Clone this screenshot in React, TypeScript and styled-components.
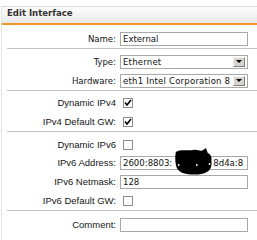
import { createGlobalStyle, styled } from 'styled-components';

const GlobalStyle = createGlobalStyle`
	html, body {
		margin: 0;
		padding: 0;
		background: #fff;
	}
	body {
		width: 257px;
		height: 240px;
		overflow: hidden;
	}
`;

const Panel = styled.div`
	margin: 6px 0 0 1px;
	border-left: 1px solid #e3e3e3;
	height: 234px;
`;

const Header = styled.div`
	height: 16px;
	line-height: 16px;
	padding-left: 5px;
	border-top: 1px solid #d8d8d8;
	border-bottom: 2px solid #f0962a;
	background: linear-gradient(#fdfdfd, #e8e8e8);
	font: bold 9.5px 'DejaVu Sans Condensed', 'DejaVu Sans', sans-serif;
	color: #333;
`;

const Section = styled.div<{ $pt: number; $line?: boolean }>`
	margin-left: 5px;
	padding-top: ${(p) => p.$pt}px;
	border-top: ${(p) => (p.$line ? '1px solid #c3c3c3' : 'none')};
`;

const Row = styled.div<{ $h?: number }>`
	display: grid;
	grid-template-columns: 109px 128px;
	column-gap: 4px;
	align-items: center;
	height: ${(p) => p.$h ?? 19}px;
`;

const Label = styled.span<{ $classic?: boolean }>`
	text-align: right;
	white-space: nowrap;
	font-family: ${(p) => (p.$classic ? "'DejaVu Sans Condensed', 'DejaVu Sans'" : "'Liberation Sans', Arial")}, sans-serif;
	font-size: 9.5px;
	color: #151515;
`;

const FieldWrap = styled.div`
	position: relative;
`;

const Field = styled.div`
	box-sizing: border-box;
	display: flex;
	align-items: center;
	height: 14px;
	padding: 0 1px 0 2px;
	border: 1px solid #a8a8a8;
	background: #fff;
	overflow: hidden;
	white-space: nowrap;
	font: 9.5px 'DejaVu Sans Condensed', 'DejaVu Sans', sans-serif;
	color: #111;
`;

const FieldText = styled.span`
	flex: 1;
	overflow: hidden;
	letter-spacing: 0.2px;
`;

const Gap = styled.span<{ $w: number }>`
	display: inline-block;
	width: ${(p) => p.$w}px;
`;

const DropButton = styled.span`
	flex: none;
	display: flex;
	align-items: center;
	justify-content: center;
	box-sizing: border-box;
	width: 12px;
	height: 10px;
	margin-right: 1px;
	background: #d6d3ce;
	border: 1px solid;
	border-color: #f4f4f4 #7f7f7f #7f7f7f #f4f4f4;

	&::after {
		content: '';
		border-left: 3px solid transparent;
		border-right: 3px solid transparent;
		border-top: 3px solid #000;
	}
`;

const Check = styled.span`
	box-sizing: border-box;
	display: flex;
	align-items: center;
	justify-content: center;
	width: 10px;
	height: 10px;
	margin-left: 3px;
	border: 1px solid #8d8d8d;
	background: #fff;
`;

const Mask = styled.svg`
	position: absolute;
	left: 55px;
	top: -8px;
`;

const Checkbox = ({ checked }: { checked?: boolean }) => (
	<Check>
		{checked && (
			<svg width="8" height="8" viewBox="0 0 8 8">
				<polyline points="1,3.5 3,6 7,1" fill="none" stroke="#000" strokeWidth="1.6" />
			</svg>
		)}
	</Check>
);

const Select = ({ value }: { value: string }) => (
	<Field>
		<FieldText>{value}</FieldText>
		<DropButton />
	</Field>
);

export default function App() {
	return (
		<>
			<GlobalStyle />
			<Panel>
				<Header>Edit Interface</Header>

				<Section $pt={4}>
					<Row>
						<Label $classic>Name:</Label>
						<Field>External</Field>
					</Row>
				</Section>

				<Section $pt={3} $line>
					<Row>
						<Label $classic>Type:</Label>
						<Select value="Ethernet" />
					</Row>
					<Row>
						<Label $classic>Hardware:</Label>
						<Select value="eth1 Intel Corporation 8" />
					</Row>
				</Section>

				<Section $pt={2} $line>
					<Row>
						<Label>Dynamic IPv4</Label>
						<Checkbox checked />
					</Row>
					<Row>
						<Label>IPv4 Default GW:</Label>
						<Checkbox checked />
					</Row>
				</Section>

				<Section $pt={4} $line>
					<Row $h={17}>
						<Label>Dynamic IPv6</Label>
						<Checkbox />
					</Row>
					<Row>
						<Label>IPv6 Address:</Label>
						<FieldWrap>
							<Field>
								2600:8803:
								<Gap $w={41} />
								8d4a:8
							</Field>
							<Mask width="40" height="28" viewBox="0 0 44 28" preserveAspectRatio="none">
								<path
									d="M1 4 C6 1 14 3 20 2 C25 1 28 4 31 2 L34 0 L36 5 C39 6 41 9 40 13 C41 18 39 22 35 24 C30 27 20 27 13 26 C6 25 2 22 1 17 C0 12 0 8 1 4 Z"
									fill="#000"
								/>
								<circle cx="4" cy="17" r="1" fill="#fff" />
								<circle cx="24" cy="17" r="1" fill="#fff" />
								<circle cx="38" cy="16" r="1" fill="#fff" />
							</Mask>
						</FieldWrap>
					</Row>
					<Row>
						<Label>IPv6 Netmask:</Label>
						<Field>128</Field>
					</Row>
					<Row>
						<Label>IPv6 Default GW:</Label>
						<Checkbox />
					</Row>
				</Section>

				<Section $pt={4} $line>
					<Row>
						<Label>Comment:</Label>
						<Field />
					</Row>
				</Section>
			</Panel>
		</>
	);
}
